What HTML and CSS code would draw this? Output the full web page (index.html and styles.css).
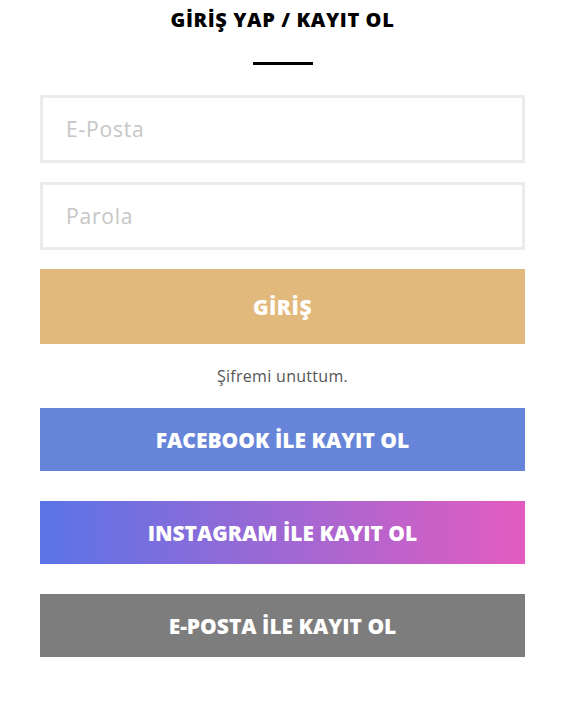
FILE: index.html
```html
<!DOCTYPE html>
<html lang="tr">
<head>
<meta charset="utf-8">
<title>Giriş Yap / Kayıt Ol</title>
<link rel="stylesheet" href="styles.css">
</head>
<body>
<main class="auth">
  <h1 class="auth__title">GİRİŞ YAP / KAYIT OL</h1>
  <div class="auth__rule"></div>
  <form class="auth__form">
    <input class="field" type="email" placeholder="E-Posta">
    <input class="field" type="password" placeholder="Parola">
    <button class="btn btn--login" type="button">GİRİŞ</button>
    <a class="forgot" href="#">Şifremi unuttum.</a>
    <div class="social">
      <a class="btn btn--facebook" href="#">FACEBOOK İLE KAYIT OL</a>
      <a class="btn btn--instagram" href="#">INSTAGRAM İLE KAYIT OL</a>
      <a class="btn btn--email" href="#">E-POSTA İLE KAYIT OL</a>
    </div>
  </form>
</main>
</body>
</html>
```

FILE: styles.css
```css
* { box-sizing: border-box; }
html, body { margin: 0; padding: 0; background: #fff; }
body { font-family: "Open Sans", "Noto Sans", sans-serif; color: #222; }

.auth {
  width: 485px;
  margin-left: 40px;
  display: flex;
  flex-direction: column;
  align-items: center;
  padding-top: 7px;
}
.auth__title {
  margin: 0;
  font-size: 20px;
  font-weight: 800;
  line-height: 26px;
  letter-spacing: 0.6px;
  color: #000;
}
.auth__rule {
  width: 60px;
  height: 3px;
  background: #000;
  margin-top: 29px;
}
.auth__form {
  width: 100%;
  display: flex;
  flex-direction: column;
  margin-top: 30px;
}
.field {
  height: 68px;
  border: 3px solid #ebebeb;
  padding: 0 23px;
  font-family: inherit;
  font-size: 21px;
  letter-spacing: 0.8px;
  color: #333;
  outline: none;
  margin-bottom: 19px;
}
.field::placeholder { color: #c6c6c6; }

.btn {
  display: flex;
  align-items: center;
  justify-content: center;
  border: 0;
  color: #fff;
  font-family: inherit;
  font-weight: 800;
  font-size: 21px;
  text-decoration: none;
  height: 63px;
}
.btn--login {
  height: 75px;
  background: #e2b97c;
  font-size: 21px;
  letter-spacing: 0.5px;
}
.forgot {
  text-align: center;
  color: #555;
  font-size: 16px;
  letter-spacing: 0.3px;
  text-decoration: none;
  line-height: 22px;
  margin: 21px 0 21px;
}
.social {
  display: flex;
  flex-direction: column;
  gap: 30px;
}
.btn--facebook { background: #6785d8; }
.btn--instagram { background: linear-gradient(90deg, #5a74e7 0%, #e35cc0 100%); }
.btn--email { background: #7d7d7d; }
```
